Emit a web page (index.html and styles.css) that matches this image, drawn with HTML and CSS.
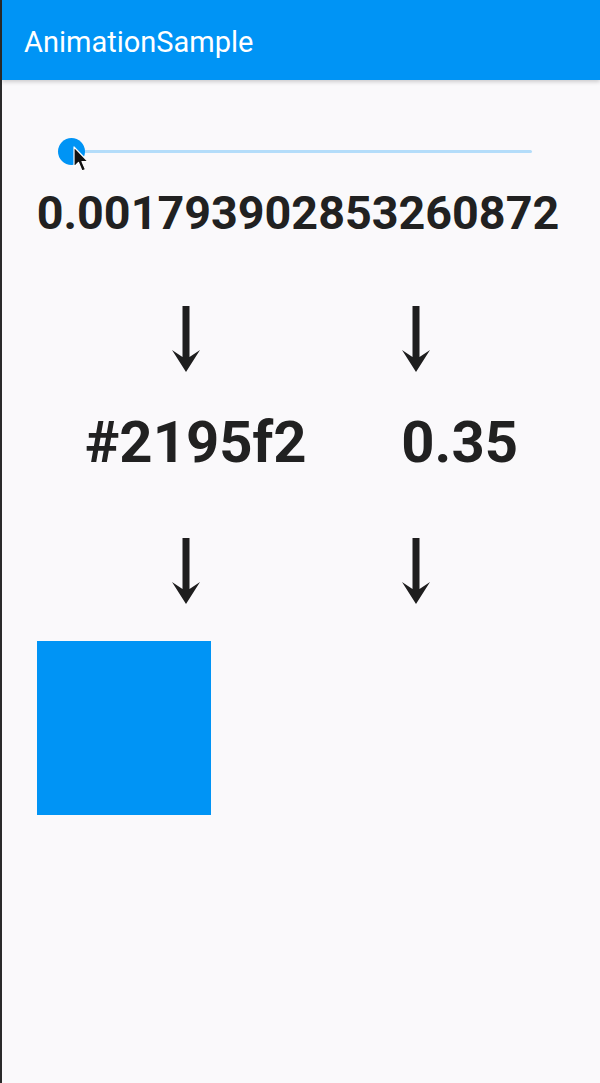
FILE: index.html
```html
<!DOCTYPE html>
<html lang="en">

<head>
    <meta charset="UTF-8">
    <meta name="viewport" content="width=device-width, initial-scale=1.0">
    <title>AnimationSample</title>
    <link rel="stylesheet" href="styles.css">
</head>

<body>
    <div class="app">
        <header class="app_bar">
            <h1>AnimationSample</h1>
        </header>
        <main class="content">
            <div class="slider">
                <div class="slider_track">
                    <div class="slider_thumb"></div>
                </div>
                <svg class="cursor" width="18" height="28" viewBox="0 0 18 28">
                    <path d="M1 1 L1 21 L5.5 16.5 L9 25 L12.5 23.5 L9 15.5 L15 15.5 Z" fill="#111" stroke="#fff" stroke-width="1.2"
                        stroke-linejoin="round" />
                </svg>
            </div>
            <p class="value">0.001793902853260872</p>
            <div class="row arrows first">
                <span class="cell"><svg class="arrow" width="28" height="66" viewBox="0 0 28 66">
                    <polygon points="10.5,0 17.5,0 17.5,51 28,44 14,66 0,44 10.5,51" />
                </svg></span>
                <span class="cell"><svg class="arrow" width="28" height="66" viewBox="0 0 28 66">
                    <polygon points="10.5,0 17.5,0 17.5,51 28,44 14,66 0,44 10.5,51" />
                </svg></span>
            </div>
            <div class="results">
                <span>#2195f2</span>
                <span>0.35</span>
            </div>
            <div class="row arrows second">
                <span class="cell"><svg class="arrow" width="28" height="66" viewBox="0 0 28 66">
                    <polygon points="10.5,0 17.5,0 17.5,51 28,44 14,66 0,44 10.5,51" />
                </svg></span>
                <span class="cell"><svg class="arrow" width="28" height="66" viewBox="0 0 28 66">
                    <polygon points="10.5,0 17.5,0 17.5,51 28,44 14,66 0,44 10.5,51" />
                </svg></span>
            </div>
            <div class="box_holder">
                <div class="box" style="opacity: 1;"></div>
            </div>
        </main>
    </div>
</body>

</html>
```

FILE: styles.css
```css
* {
    font-family: Roboto, "Noto Sans", sans-serif;
    box-sizing: border-box;
}

body {
    margin: 0;
    background: #FAF9FB;
}

.app {
    min-height: 1083px;
    border-left: 2px solid #2a2a2a;
    background: #FAF9FB;
}

.app_bar {
    height: 80px;
    background: #0094F5;
    display: flex;
    align-items: center;
    padding: 3px 0 0 22px;
    box-shadow: 0 2px 4px rgba(0, 0, 0, 0.18);
}

.app_bar h1 {
    margin: 0;
    color: #fff;
    font-size: 29px;
    font-weight: 400;
}

.content {
    display: flex;
    flex-flow: column;
}

.slider {
    position: relative;
    margin: 57px 0 0 56px;
    width: 474px;
    height: 28px;
    display: flex;
    align-items: center;
}

.slider_track {
    position: relative;
    width: 100%;
    height: 3px;
    background: #B4DDFA;
    border-radius: 2px;
}

.slider_thumb {
    position: absolute;
    left: 0;
    top: -12px;
    width: 27px;
    height: 27px;
    border-radius: 50%;
    background: #0094F5;
}

.cursor {
    position: absolute;
    left: 15px;
    top: 9px;
}

.value {
    margin: 21px 0 0;
    padding-right: 6px;
    text-align: center;
    font-size: 46.7px;
    font-weight: 700;
    color: #212121;
    line-height: 54px;
}

.row {
    display: flex;
    justify-content: space-evenly;
    align-items: center;
}

.cell {
    width: 92px;
    display: flex;
    justify-content: center;
}

.arrow {
    fill: #1e1e1e;
    display: block;
}

.arrows.first {
    margin-top: 66px;
}

.results {
    display: flex;
    justify-content: space-between;
    padding: 0 82px 0 83px;
    margin-top: 40px;
    font-size: 58px;
    font-weight: 700;
    color: #212121;
    line-height: 60px;
}

.arrows.second {
    margin-top: 66px;
}

.box_holder {
    padding: 37px 0 0 35px;
}

.box {
    width: 174px;
    height: 174px;
    background: #0094F5;
}
```
